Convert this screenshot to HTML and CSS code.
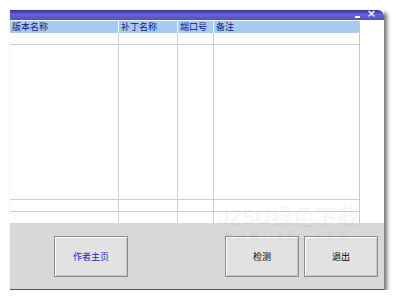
FILE: index.html
```html
<!DOCTYPE html>
<html lang="zh-CN">
<head>
    <meta charset="UTF-8">
    <title>补丁检测</title>
    <link rel="stylesheet" href="styles.css">
</head>
<body>
    <div class="window">
        <div class="titlebar">
            <span class="btn-min"></span>
            <span class="btn-close">×</span>
        </div>
        <div class="client">
            <div class="list">
                <div class="row head">
                    <div class="cell">版本名称</div>
                    <div class="cell">补丁名称</div>
                    <div class="cell">端口号</div>
                    <div class="cell">备注</div>
                </div>
                <div class="row">
                    <div class="cell"></div><div class="cell"></div><div class="cell"></div><div class="cell"></div>
                </div>
                <div class="row tall">
                    <div class="cell"></div><div class="cell"></div><div class="cell"></div><div class="cell"></div>
                </div>
                <div class="row">
                    <div class="cell"></div><div class="cell"></div><div class="cell"></div><div class="cell"></div>
                </div>
                <div class="row last">
                    <div class="cell"></div><div class="cell"></div><div class="cell"></div><div class="cell"></div>
                </div>
            </div>
            <div class="side"></div>
        </div>
        <div class="panel">
            <button class="homepage">作者主页</button>
            <div class="actions">
                <button>检测</button>
                <button>退出</button>
            </div>
        </div>
        <div class="watermark">
            <div class="wm-big">JZ5U绿色下载</div>
            <div class="wm-small">www.jz5u.com</div>
        </div>
    </div>
</body>
</html>
```

FILE: styles.css
```css
* {
    margin: 0;
    padding: 0;
    box-sizing: border-box;
}

body {
    background: #fff;
    font-family: "Noto Sans CJK SC", "Liberation Sans", sans-serif;
    font-size: 9px;
}

.window {
    position: relative;
    width: 374px;
    margin: 10px 0 0 10px;
    box-shadow: 3px 3px 4px rgba(0,0,0,0.55);
}

.titlebar {
    position: relative;
    height: 10px;
    background: linear-gradient(#35359a, #6262d4 45%, #5252bc);
    border-top-right-radius: 6px;
}

.btn-min {
    position: absolute;
    right: 24px;
    top: 6px;
    width: 5px;
    height: 2px;
    background: #fff;
}

.btn-close {
    position: absolute;
    right: 8px;
    top: -3px;
    color: #fff;
    font-family: "DejaVu Sans", sans-serif;
    font-size: 11px;
    font-weight: bold;
    line-height: 14px;
}

.client {
    display: flex;
    background: #fff;
    padding-top: 1px;
}

.list {
    width: 350px;
    border-right: 1px solid #c8c8c8;
}

.row {
    display: grid;
    grid-template-columns: 109px 59px 36px 1fr;
    height: 12px;
    border-bottom: 1px solid #d0d0d0;
}

.row .cell {
    border-right: 1px solid #d0d0d0;
    padding-left: 2px;
    line-height: 12px;
}

.row .cell:last-child {
    border-right: none;
}

.head {
    background: #a6caf0;
    color: #10208a;
    border-bottom: none;
}

.head .cell {
    border-right: 1px solid #f4f8ff;
    line-height: 11px;
}

.tall {
    height: 155px;
}

.last {
    height: 11px;
    border-bottom: none;
}

.side {
    flex: 1;
    background: #fff;
}

.panel {
    display: flex;
    justify-content: space-between;
    height: 67px;
    padding: 13px 6px 0 44px;
    background: #d8d8d8;
    border-bottom: 1px solid #505050;
}

.actions {
    display: flex;
    gap: 5px;
}

button {
    width: 74px;
    height: 41px;
    background: #e2e2e2;
    border: 1px solid #8c8c8c;
    box-shadow: inset 1px 1px 0 #fff, inset -1px -1px 0 #c4c4c4;
    font-family: "Noto Sans CJK SC", sans-serif;
    font-size: 9px;
    color: #000;
}

.homepage {
    color: #2424c0;
}

.watermark {
    position: absolute;
    left: 190px;
    top: 196px;
    width: 176px;
    text-align: center;
    white-space: nowrap;
    color: rgba(0,0,0,0.05);
    font-family: "Liberation Sans", "Noto Sans CJK SC", sans-serif;
    font-weight: bold;
    pointer-events: none;
}

.wm-big {
    font-size: 22px;
    line-height: 24px;
}

.wm-small {
    font-size: 12px;
    line-height: 12px;
    letter-spacing: 4px;
}
```
